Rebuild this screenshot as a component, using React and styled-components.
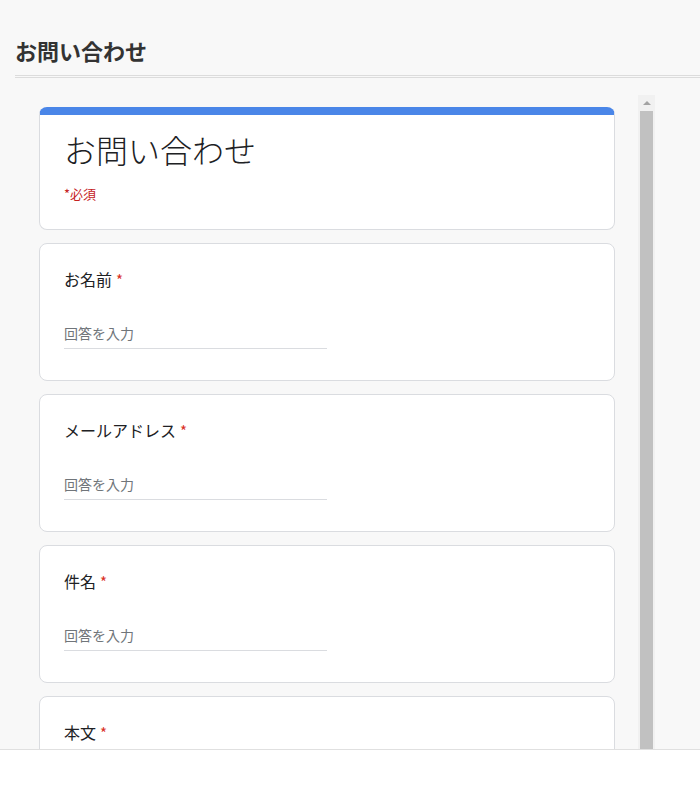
import React from "react";
import styled, { createGlobalStyle } from "styled-components";

const Global = createGlobalStyle`
  body { margin: 0; font-family: "Noto Sans CJK JP", "Noto Sans", sans-serif; }
`;
const Page = styled.div`display:flex;flex-direction:column;height:791px;overflow:hidden;`;
const Main = styled.div`height:749px;background:#f8f8f8;overflow:hidden;display:flex;flex-direction:column;`;
const Header = styled.div`margin:0 0 0 15px;padding-top:36px;border-bottom:3px double #dcdcdc;`;
const HeaderTitle = styled.h1`margin:0 0 11px;font-size:22px;line-height:28px;font-weight:700;color:#333;`;
const Frame = styled.div`margin:17px 0 0 15px;width:640px;flex:1;display:flex;overflow:hidden;`;
const Content = styled.div`flex:1;padding:12px 23px 0 24px;display:flex;flex-direction:column;gap:13px;`;
const Scrollbar = styled.div`width:17px;background:#f1f1f1;display:flex;flex-direction:column;align-items:center;`;
const Arrow = styled.div`height:16px;display:flex;align-items:center;justify-content:center;
  &::after{content:"";border-left:4px solid transparent;border-right:4px solid transparent;border-bottom:4px solid #a3a3a3;}`;
const Thumb = styled.div`width:13px;flex:1;background:#c1c1c1;`;
const Card = styled.div`background:#fff;border:1px solid #dadce0;border-radius:8px;
  ${p => p.$accent && "border-top:8px solid #4a86e8;"}
  padding:${p => p.$accent ? "14px 24px 26px" : "23px 24px 31px"};flex-shrink:0;`;
const FormTitle = styled.div`font-size:32px;line-height:40px;font-weight:300;color:#202124;`;
const Required = styled.div`margin-top:16px;font-size:13px;line-height:18px;color:#c5221f;`;
const Label = styled.div`font-size:16px;line-height:24px;color:#202124;
  span{color:#d93025;margin-left:4px;font-size:15px;}`;
const Input = styled.div`margin-top:31px;width:263px;padding-bottom:5px;border-bottom:1px solid #dadce0;
  font-size:14px;line-height:20px;color:#70757a;`;
const Footer = styled.div`flex:1;background:#fff;border-top:1px solid #e0e0e0;`;

const qs = ["お名前", "メールアドレス", "件名", "本文"];

export default function App() {
  return (
    <Page>
      <Global />
      <Main>
        <Header><HeaderTitle>お問い合わせ</HeaderTitle></Header>
        <Frame>
          <Content>
            <Card $accent>
              <FormTitle>お問い合わせ</FormTitle>
              <Required>*必須</Required>
            </Card>
            {qs.map(q => (
              <Card key={q}>
                <Label>{q}<span>*</span></Label>
                <Input>回答を入力</Input>
              </Card>
            ))}
          </Content>
          <Scrollbar><Arrow /><Thumb /></Scrollbar>
        </Frame>
      </Main>
      <Footer />
    </Page>
  );
}
